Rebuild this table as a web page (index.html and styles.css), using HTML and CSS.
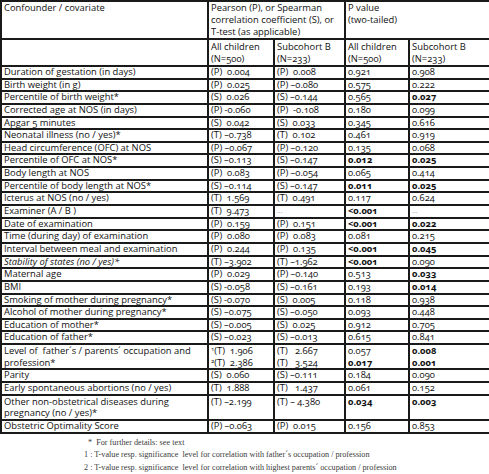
FILE: index.html
```html
<!DOCTYPE html>
<html>
<head>
<meta charset="utf-8">
<link rel="stylesheet" href="styles.css">
</head>
<body>
<table class="tbl">
<colgroup>
<col class="c1"><col class="c2"><col class="c3"><col class="c4"><col class="c5">
</colgroup>
<thead>
<tr class="h1">
<td>Confounder / covariate</td>
<td colspan="2">Pearson (P), or Spearman correlation coefficient (S), or T-test (as applicable)</td>
<td colspan="2">P value<br>(two-tailed)</td>
</tr>
<tr class="h2">
<td></td>
<td>All children<br>(N=500)</td>
<td>Subcohort B<br>(N=233)</td>
<td>All children<br>(N=500)</td>
<td>Subcohort B<br>(N=233)</td>
</tr>
</thead>
<tbody>
<tr><td>Duration of gestation (in days)</td><td>(P)  0.004</td><td>(P)  0.008</td><td>0.921</td><td>0.908</td></tr>
<tr><td>Birth weight (in g)</td><td>(P)  0.025</td><td>(P) –0.080</td><td>0.575</td><td>0.222</td></tr>
<tr><td>Percentile of birth weight*</td><td>(S)  0.026</td><td>(S) –0.144</td><td>0.565</td><td class="b">0.027</td></tr>
<tr><td>Corrected age at NOS (in days)</td><td>(P) -0.060</td><td>(P)  -0.108</td><td>0.180</td><td>0.099</td></tr>
<tr><td>Apgar 5 minutes</td><td>(S)  0.042</td><td>(S)  0.033</td><td>0.345</td><td>0.616</td></tr>
<tr><td>Neonatal illness (no / yes)*</td><td>(T) –0.738</td><td>(T)  0.102</td><td>0.461</td><td>0.919</td></tr>
<tr><td>Head circumference (OFC) at NOS</td><td>(P) –0.067</td><td>(P) –0.120</td><td>0.135</td><td>0.068</td></tr>
<tr><td>Percentile of OFC at NOS*</td><td>(S) –0.113</td><td>(S) –0.147</td><td class="b">0.012</td><td class="b">0.025</td></tr>
<tr><td>Body length at NOS</td><td>(P)  0.083</td><td>(P) –0.054</td><td>0.065</td><td>0.414</td></tr>
<tr><td>Percentile of body length at NOS*</td><td>(S) –0.114</td><td>(S) –0.147</td><td class="b">0.011</td><td class="b">0.025</td></tr>
<tr><td>Icterus at NOS (no / yes)</td><td>(T)  1.569</td><td>(T)  0.491</td><td>0.117</td><td>0.624</td></tr>
<tr><td>Examiner (A / B )</td><td>(T)  9.473</td><td class="na">...</td><td class="b">&lt;0.001</td><td class="na">...</td></tr>
<tr><td>Date of examination</td><td>(P)  0.159</td><td>(P)  0.151</td><td class="b">&lt;0.001</td><td class="b">0.022</td></tr>
<tr><td>Time (during day) of examination</td><td>(P)  0.080</td><td>(P)  0.083</td><td>0.081</td><td>0.215</td></tr>
<tr><td>Interval between meal and examination</td><td>(P)  0.244</td><td>(P)  0.135</td><td class="b">&lt;0.001</td><td class="b">0.045</td></tr>
<tr><td class="it">Stability of states (no / yes)*</td><td>(T) –3.902</td><td>(T) –1.962</td><td class="b">&lt;0.001</td><td>0.090</td></tr>
<tr><td>Maternal age</td><td>(P)  0.029</td><td>(P) –0.140</td><td>0.513</td><td class="b">0.033</td></tr>
<tr><td>BMI</td><td>(S) -0.058</td><td>(S) –0.161</td><td>0.193</td><td class="b">0.014</td></tr>
<tr><td>Smoking of mother during pregnancy*</td><td>(S) -0.070</td><td>(S)  0.005</td><td>0.118</td><td>0.938</td></tr>
<tr><td>Alcohol of mother during pregnancy*</td><td>(S) –0.075</td><td>(S) –0.050</td><td>0.093</td><td>0.448</td></tr>
<tr><td>Education of mother*</td><td>(S) –0.005</td><td>(S)  0.025</td><td>0.912</td><td>0.705</td></tr>
<tr><td>Education of father*</td><td>(S) –0.023</td><td>(S) –0.013</td><td>0.615</td><td>0.841</td></tr>
<tr class="two"><td>Level of  father´s / parents´ occupation and profession*</td><td><sup>1</sup>(T)  1.906<br><sup>2</sup>(T)  2.386</td><td>(T)   2.667<br>(T)   3.524</td><td>0.057<br><b>0.017</b></td><td class="b">0.008<br>0.001</td></tr>
<tr><td>Parity</td><td>(S)  0.060</td><td>(S) –0.111</td><td>0.184</td><td>0.090</td></tr>
<tr><td>Early spontaneous abortions (no / yes)</td><td>(T)  1.888</td><td>(T)   1.437</td><td>0.061</td><td>0.152</td></tr>
<tr class="two"><td>Other non-obstetrical diseases during pregnancy (no / yes)*</td><td>(T) –2.199</td><td>(T) – 4.380</td><td class="b">0.034</td><td class="b">0.003</td></tr>
<tr><td>Obstetric Optimality Score</td><td>(P) –0.063</td><td>(P)  0.015</td><td>0.156</td><td>0.853</td></tr>
</tbody>
</table>
<div class="notes">
<p class="n0">*  For further details: see text</p>
<p>1 : T-value resp. significance  level for correlation with father´s occupation / profession</p>
<p>2 : T-value resp. significance  level for correlation with highest parents´ occupation / profession</p>
</div>
</body>
</html>
```
FILE: styles.css
```css
html, body {
  margin: 0;
  padding: 0;
  background: #fff;
}
.tbl {
  border-collapse: separate;
  border-spacing: 0;
  border: 1px solid #1a1a1a;
  width: 489px;
  table-layout: fixed;
  font-family: "Open Sans", "Lato", sans-serif;
  font-variant-numeric: oldstyle-nums;
  font-size: 9.4px;
  color: #111;
}
.c1 { width: 207px; }
.c2 { width: 66px; }
.c3 { width: 71px; }
.c4 { width: 64px; }
.c5 { width: 81px; }
.tbl td {
  border: 1px solid #1a1a1a;
  padding: 0 0 0 2px;
  line-height: 10.64px;
  vertical-align: top;
  white-space: pre-wrap;
  overflow: hidden;
}
.tbl .two td {
  line-height: 11.64px;
}
.tbl thead td {
  line-height: 12px;
  padding-top: 0;
  padding-bottom: 0;
}
.tbl .h1 td {
  height: 33px;
}
.tbl .h2 td {
  height: 24px;
  padding-top: 1px;
}
.b, .tbl b {
  font-weight: 700;
}
.it {
  font-style: italic;
}
.na {
  color: #999;
  font-size: 7px;
}
sup {
  font-size: 6px;
  line-height: 0;
  vertical-align: 3px;
}
.notes {
  font-family: "Liberation Serif", "Times New Roman", serif;
  font-size: 8.2px;
  color: #3a3a3a;
  padding-left: 84px;
  padding-top: 3px;
}
.notes p {
  margin: 0;
  line-height: 12.5px;
  white-space: pre;
}
.notes .n0 {
  padding-left: 4px;
}
```
